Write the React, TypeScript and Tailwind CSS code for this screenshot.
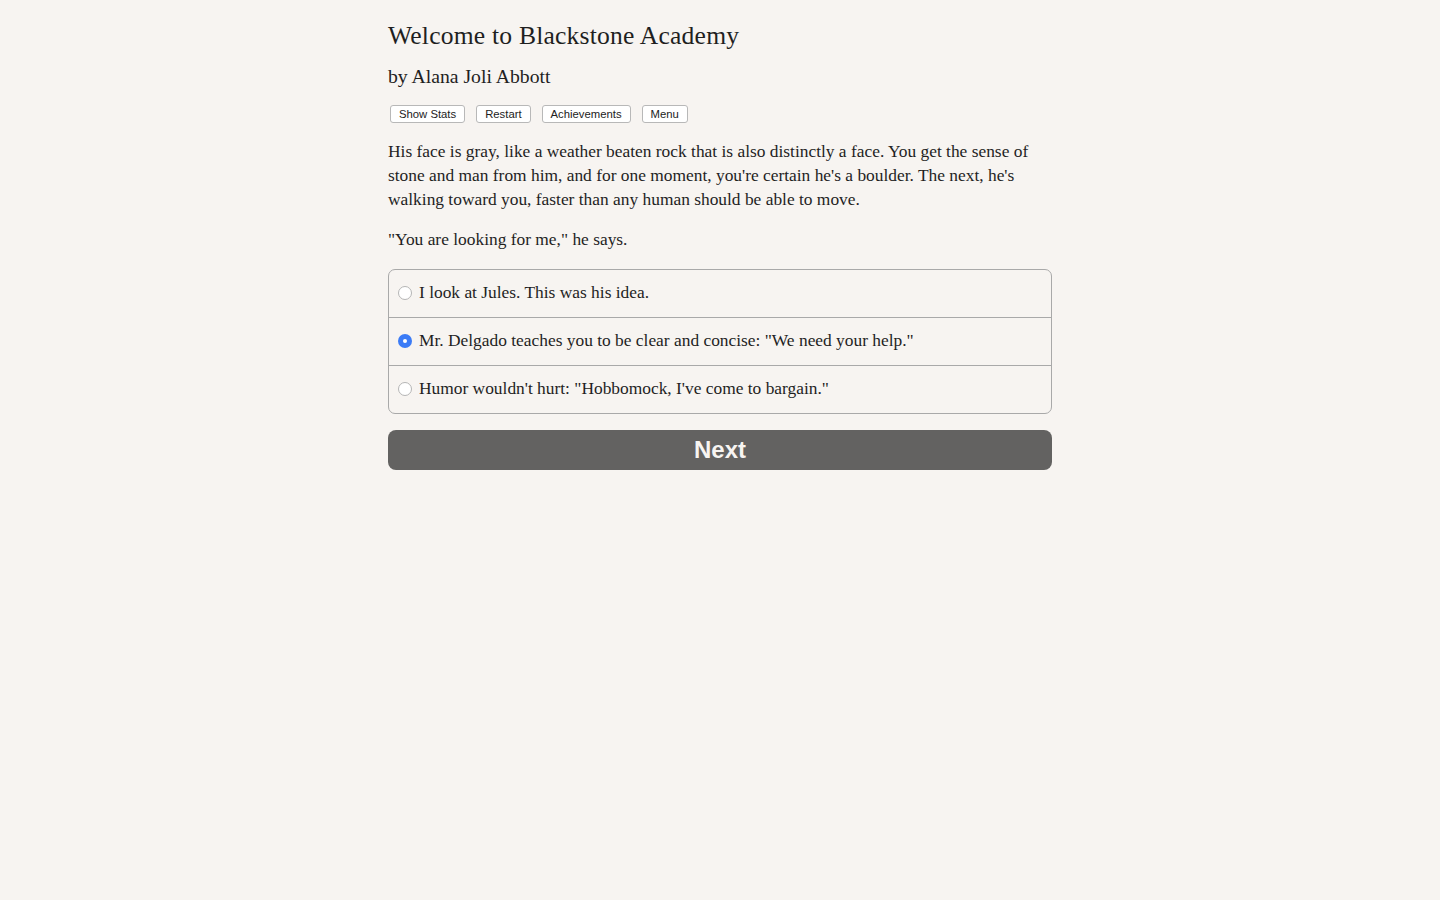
import { useState } from "react";

const choices = [
  "I look at Jules. This was his idea.",
  'Mr. Delgado teaches you to be clear and concise: "We need your help."',
  'Humor wouldn\'t hurt: "Hobbomock, I\'ve come to bargain."',
];

const serif = "font-['Palatino_Linotype','Book_Antiqua','Liberation_Serif',serif]";

const App = () => {
  const [selected, setSelected] = useState(1);

  return (
    <div className="min-h-screen bg-[#f7f4f1] text-[#1f1f1f]">
      <div className={`w-[664px] ml-[388px] pt-[20px] ${serif}`}>
        <h1 className="text-[25.6px] leading-[32px] tracking-[0.2px]">Welcome to Blackstone Academy</h1>
        <h2 className="text-[19.7px] leading-[24px] mt-[12px]">by Alana Joli Abbott</h2>

        <div className="flex gap-[11px] mt-[17px] ml-[2px] font-['Liberation_Sans',Arial,sans-serif]">
          {["Show Stats", "Restart", "Achievements", "Menu"].map((label) => (
            <button
              key={label}
              className="h-[18px] px-[8px] text-[11.3px] leading-[16px] bg-white border border-[#b8b8b8] rounded-[3px] text-[#222]"
            >
              {label}
            </button>
          ))}
        </div>

        <p className="text-[17.4px] leading-[24px] mt-[16px]">
          His face is gray, like a weather beaten rock that is also distinctly a face. You get the sense of stone and
          man from him, and for one moment, you're certain he's a boulder. The next, he's walking toward you, faster
          than any human should be able to move.
        </p>
        <p className="text-[17.4px] leading-[24px] mt-[16px]">"You are looking for me," he says.</p>

        <div className="mt-[18px] border border-[#a9a9a9] rounded-[7px] overflow-hidden">
          {choices.map((c, i) => (
            <label
              key={c}
              onClick={() => setSelected(i)}
              className={`flex items-center pl-[9px] pb-[4px] cursor-pointer ${
                i > 0 ? "h-[48px] border-t border-[#a9a9a9]" : "h-[47px]"
              }`}
            >
              {selected === i ? (
                <span className="w-[14px] h-[14px] mt-[2px] rounded-full bg-[#3b7bf6] flex items-center justify-center">
                  <span className="w-[4px] h-[4px] rounded-full bg-white" />
                </span>
              ) : (
                <span className="w-[14px] h-[14px] mt-[2px] rounded-full bg-white border border-[#b5b5b5]" />
              )}
              <span className="ml-[7px] text-[17.4px] leading-[24px]">{c}</span>
            </label>
          ))}
        </div>

        <button className="mt-[16px] w-full h-[40px] rounded-[8px] bg-[#636261] text-[#f7f4f1] text-[24px] font-bold font-['Liberation_Sans',Arial,sans-serif]">
          Next
        </button>
      </div>
    </div>
  );
};

export default App;
